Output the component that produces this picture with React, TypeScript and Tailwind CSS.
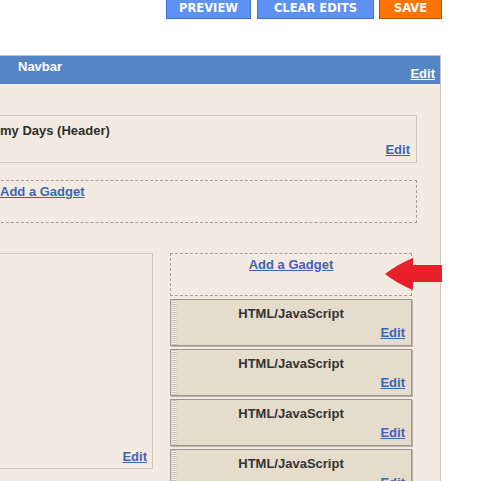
import React from "react";

const font = { fontFamily: '"Liberation Sans", Arial, sans-serif' };
const btnFont = { fontFamily: '"DejaVu Sans", Verdana, sans-serif' };

const EditLink = ({ className = "" }: { className?: string }) => (
  <a className={`text-[13px] font-bold text-[#3d63b8] underline leading-none ${className}`}>Edit</a>
);

const HtmlWidget = () => (
  <div className="relative flex h-[47px] w-[242px] mb-[3px] border border-[#9d968e] shadow-[1px_1px_0_#b9b2a9] bg-[#e5dccc]">
    <div className="w-[5px] ml-[1px] bg-[repeating-linear-gradient(0deg,#c9c1b5_0px,#c9c1b5_1px,#f4f0ea_1px,#f4f0ea_2px)]" />
    <div className="flex-1 flex flex-col pr-[6px]">
      <div className="text-center text-[13px] font-bold text-[#333] pt-[6px] leading-[15px]">HTML/JavaScript</div>
      <div className="mt-auto mb-[5px] text-right leading-none">
        <EditLink />
      </div>
    </div>
  </div>
);

export default function App() {
  return (
    <div className="relative w-[481px] h-[481px] overflow-hidden bg-white" style={font}>
      {/* Top buttons */}
      <div className="flex justify-end pr-[39px] h-[55px] items-start" style={btnFont}>
        <button className="w-[85px] h-[19px] ml-[6px] bg-[#5d92f2] border border-[#3f6fd6] border-t-0 text-white text-[11.5px] font-bold leading-none">PREVIEW</button>
        <button className="w-[117px] h-[19px] ml-[6px] bg-[#5d92f2] border border-[#3f6fd6] border-t-0 text-white text-[11.5px] font-bold leading-none">CLEAR EDITS</button>
        <button className="w-[63px] h-[19px] ml-[5px] bg-[#ff7300] border border-[#b85400] border-t-0 text-white text-[11.5px] font-bold leading-none">SAVE</button>
      </div>

      {/* Layout panel */}
      <div className="ml-[-60px] w-[501px] h-[426px] border-r border-t border-[#c9c4be] bg-[#f3ebe2]">
        <div className="flex justify-between h-[28px] bg-[#5485c4] pl-[78px] pr-[5px]">
          <span className="text-white text-[13px] font-bold pt-[4px] leading-none">Navbar</span>
          <a className="text-white text-[13px] font-bold underline self-end mb-[4px] leading-none">Edit</a>
        </div>

        <div className="pl-[46px] pr-[23px] pt-[31px]">
          {/* Header */}
          <div className="h-[48px] border border-[#cdc7c0] flex flex-col pl-[13px] pr-[6px]">
            <div className="text-[13px] font-bold text-[#2e2e2e] pt-[8px] leading-none">my Days (Header)</div>
            <div className="mt-auto mb-[5px] text-right leading-none">
              <EditLink />
            </div>
          </div>

          {/* Add a gadget (wide) */}
          <div className="h-[43px] mt-[17px] border border-dashed border-[#a59f98] pl-[13px] pt-[2px] leading-none">
            <a className="text-[13px] font-bold text-[#3d63b8] underline leading-none">Add a Gadget</a>
          </div>

          {/* Columns */}
          <div className="flex mt-[30px]">
            <div className="w-[167px] h-[216px] border border-[#cdc7c0] flex flex-col justify-end items-end pr-[5px] pb-[5px]">
              <EditLink />
            </div>
            <div className="ml-[17px] flex flex-col">
              <div className="w-[242px] h-[43px] mb-[3px] border border-dashed border-[#a59f98] text-center pt-[2px] leading-none">
                <a className="text-[13px] font-bold text-[#3d63b8] underline leading-none">Add a Gadget</a>
              </div>
              <HtmlWidget />
              <HtmlWidget />
              <HtmlWidget />
              <HtmlWidget />
            </div>
          </div>
        </div>
      </div>

      {/* Red arrow overlay */}
      <svg className="absolute left-[384px] top-[256px]" width="60" height="36" viewBox="0 0 60 36">
        <path
          d="M1 18 Q14 8 29 2 L29 9 L58 9 L58 26 L29 26 L29 34 Q14 28 1 18 Z"
          fill="#e8202a"
        />
      </svg>
    </div>
  );
}
